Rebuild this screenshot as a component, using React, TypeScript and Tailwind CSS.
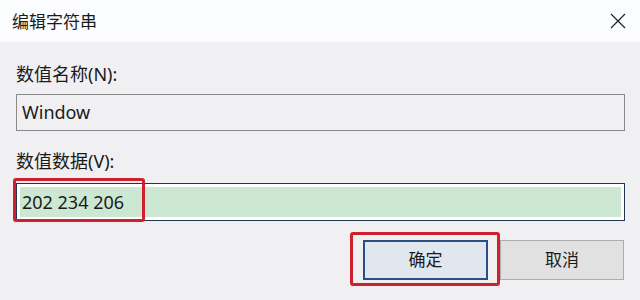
import React from "react";

const font = { fontFamily: '"Noto Sans", "Noto Sans CJK SC", sans-serif' };

const App = () => {
  return (
    <div
      className="relative w-[640px] h-[300px] overflow-hidden bg-[#f0f0f3] text-[#1a1a1a]"
      style={font}
    >
      {/* title bar */}
      <div className="flex h-[42px] items-center justify-between bg-[#fbfcfd] pl-[12px] pr-[14px]">
        <span className="text-[17px] leading-none">编辑字符串</span>
        <svg width="16" height="16" viewBox="0 0 16 16" className="text-[#222]">
          <path d="M1 1L15 15M15 1L1 15" stroke="currentColor" strokeWidth="1.2" />
        </svg>
      </div>

      <div className="flex flex-col px-[16px] pt-[20px] pr-[15px]">
        <label className="text-[18px] leading-[24px]">数值名称(N):</label>
        <div className="mt-[8px] flex h-[37px] items-center border border-[#8a8a8a] bg-[#f0f0f3] px-[5px] text-[18px]">
          Window
        </div>

        <label className="mt-[18px] text-[18px] leading-[24px]">数值数据(V):</label>
        <div className="relative mt-[10px] h-[38px] border border-[#1f3550] bg-white p-[3px]">
          <div className="flex h-full items-center bg-[#cde8d2] px-[2px] text-[18px]">
            202 234 206
          </div>
          <div className="absolute left-[-4px] top-[-6px] h-[44px] w-[132px] rounded-[3px] border-[3px] border-[#d0202e]" />
        </div>

        <div className="mt-[19px] flex justify-end gap-[12px] pr-[1px]">
          <div className="relative">
            <button className="flex h-[40px] w-[125px] items-center justify-center border-2 border-[#2a4f85] bg-[#e1e7ef] text-[17px]">
              确定
            </button>
            <div className="absolute left-[-13px] top-[-8px] h-[54px] w-[150px] rounded-[3px] border-[3px] border-[#d0202e]" />
          </div>
          <button className="flex h-[40px] w-[124px] items-center justify-center border border-[#adadad] bg-[#e1e1e1] text-[17px]">
            取消
          </button>
        </div>
      </div>
    </div>
  );
};

export default App;
